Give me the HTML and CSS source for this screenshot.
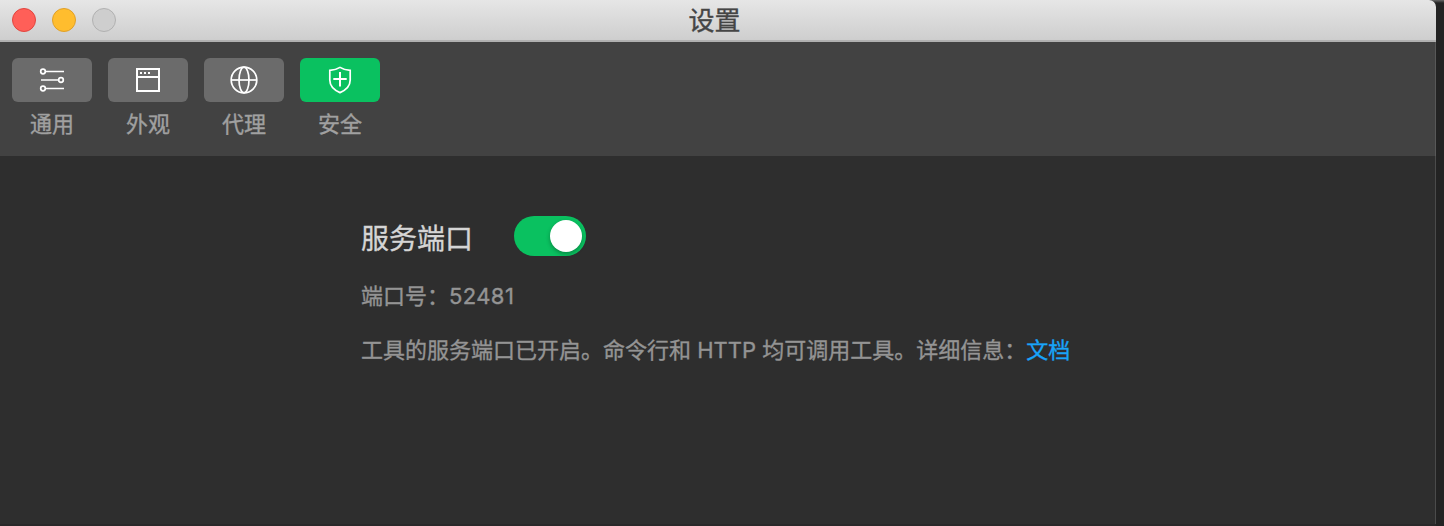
FILE: index.html
```html
<!DOCTYPE html>
<html lang="zh-CN">
<head>
<meta charset="utf-8">
<title>设置</title>
<link rel="stylesheet" href="styles.css">
</head>
<body>
<div class="window">
  <header class="titlebar">
    <div class="lights">
      <span class="light light-close"></span>
      <span class="light light-minimize"></span>
      <span class="light light-zoom"></span>
    </div>
    <h1 class="title">设置</h1>
  </header>
  <nav class="tabs">
    <div class="tab">
      <div class="tab-button">
        <svg class="icon" viewBox="0 0 32 32"><path d="M9.3 7.5H28M5 16h18M9.3 24.5H28"/><circle cx="7" cy="7.5" r="2.3"/><circle cx="25" cy="16" r="2.3"/><circle cx="7" cy="24.5" r="2.3"/></svg>
      </div>
      <span class="tab-label">通用</span>
    </div>
    <div class="tab">
      <div class="tab-button">
        <svg class="icon" viewBox="0 0 32 32"><path d="M5 5h22v22H5zM5 13h22" stroke-width="2"/><path d="M8 9h2M12 9h2M16 9h2" stroke-width="2"/></svg>
      </div>
      <span class="tab-label">外观</span>
    </div>
    <div class="tab">
      <div class="tab-button">
        <svg class="icon" viewBox="0 0 32 32"><circle cx="16" cy="16" r="12.8"/><ellipse cx="16" cy="16" rx="5" ry="12.8"/><path d="M3 16h26"/></svg>
      </div>
      <span class="tab-label">代理</span>
    </div>
    <div class="tab tab-active">
      <div class="tab-button">
        <svg class="icon" viewBox="0 0 32 32"><path d="M16 3.4C13.5 5 9.5 6.2 5.8 6.4V16C5.8 21.5 9.5 25.8 16 28.6C22.5 25.8 26.2 21.5 26.2 16V6.4C22.5 6.2 18.5 5 16 3.4Z"/><path d="M9.3 15h13.4M16 8v14.5" stroke-width="2"/></svg>
      </div>
      <span class="tab-label">安全</span>
    </div>
  </nav>
  <main class="content">
    <div class="port-row">
      <h2 class="port-title">服务端口</h2>
      <span class="switch"><span class="knob"></span></span>
    </div>
    <p class="info">端口号：<span class="number">52481</span></p>
    <p class="info">工具的服务端口已开启。命令行和 HTTP 均可调用工具。详细信息：<a class="link">文档</a></p>
  </main>
</div>
</body>
</html>
```
FILE: styles.css
```css
body {
  margin: 0;
  height: 526px;
  overflow: hidden;
  background: linear-gradient(#686868 0, #3a3a3a 2px, #232323 3px, #232323 100%);
  font-family: Inter, "Noto Sans CJK SC", sans-serif;
  -webkit-text-stroke: 0.35px currentColor;
}
.window {
  box-sizing: border-box;
  display: flex;
  flex-direction: column;
  width: 1436px;
  height: 526px;
  border-bottom: 2px solid #292829;
  border-top-right-radius: 7px;
  overflow: hidden;
  background: #2e2e2e;
}
.titlebar {
  box-sizing: border-box;
  display: grid;
  grid-template-columns: 1fr auto 1fr;
  align-items: center;
  height: 42px;
  padding: 0 19px 0 12px;
  border-bottom: 2px solid #b0b0b0;
  background: linear-gradient(#e6e6e6, #cecece);
}
.lights {
  display: flex;
  gap: 16px;
}
.light {
  box-sizing: border-box;
  width: 24px;
  height: 24px;
  border: 1px solid;
  border-radius: 50%;
}
.light-close {
  background: #ff5f58;
  border-color: #e2453e;
}
.light-minimize {
  background: #ffbd2e;
  border-color: #e0a028;
}
.light-zoom {
  background: #cecece;
  border-color: #b1b1b1;
}
.title {
  margin: 0;
  padding-top: 2px;
  font-size: 26px;
  line-height: 38px;
  font-weight: 400;
  color: #454545;
}
.tabs {
  box-sizing: border-box;
  display: flex;
  gap: 16px;
  height: 114px;
  padding: 16px 12px 0;
  border-right: 1px solid #585858;
  background: #424242;
}
.tab {
  display: flex;
  flex-direction: column;
  align-items: center;
  width: 80px;
}
.tab-button {
  display: flex;
  align-items: center;
  justify-content: center;
  width: 80px;
  height: 44px;
  border-radius: 6px;
  background: #6b6b6b;
}
.tab-active .tab-button {
  background: #0ac160;
}
.icon {
  width: 32px;
  height: 32px;
  fill: none;
  stroke: #fff;
  stroke-width: 1.7;
}
.tab-label {
  margin-top: 6px;
  font-size: 22px;
  line-height: 32px;
  color: #a0a0a0;
}
.content {
  flex: 1;
  padding: 60px 0 0 361px;
  border-right: 1px solid #4b4b4b;
}
.port-row {
  display: flex;
  align-items: flex-start;
  gap: 41px;
  height: 64px;
}
.port-title {
  margin: 3px 0 0;
  font-size: 28px;
  line-height: 40px;
  font-weight: 400;
  color: #d5d5d5;
}
.switch {
  box-sizing: border-box;
  display: flex;
  justify-content: flex-end;
  width: 72px;
  height: 40px;
  padding: 4px;
  border-radius: 20px;
  background: #0ac160;
}
.knob {
  width: 32px;
  height: 32px;
  border-radius: 50%;
  background: #fff;
  box-shadow: 0 2px 4px rgba(0, 0, 0, 0.3);
}
.info {
  margin: 0 0 22px;
  font-size: 22px;
  line-height: 32px;
  color: #949494;
  white-space: nowrap;
}
.number {
  letter-spacing: 0.4px;
}
.link {
  color: #18a4fa;
}
```
